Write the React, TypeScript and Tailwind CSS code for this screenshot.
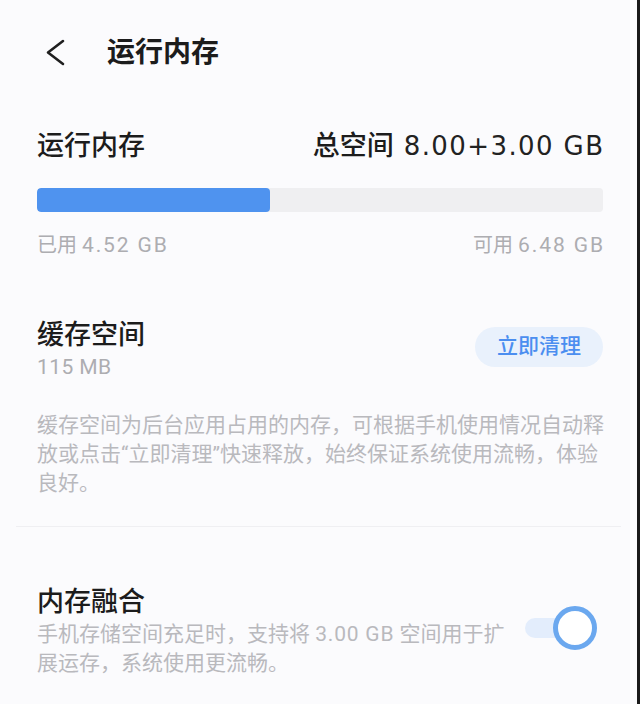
import React from "react";

const FONT = { fontFamily: 'Roboto, "Noto Sans CJK SC", sans-serif' };
const WIDE = { fontFamily: '"DejaVu Sans", "Noto Sans CJK SC", sans-serif' };

function Chevron() {
  return (
    <svg width="20" height="28" viewBox="0 0 20 28" fill="none">
      <polyline
        points="17,2 2,13.5 17,25"
        stroke="#1f1f1f"
        strokeWidth="2.6"
        strokeLinecap="round"
        strokeLinejoin="round"
      />
    </svg>
  );
}

function Toggle() {
  return (
    <div className="relative w-[72px] h-[44px] shrink-0">
      <div className="absolute left-0 top-[12px] h-[20px] w-[52px] rounded-full bg-[#e3edfc]" />
      <div className="absolute right-0 top-0 h-[44px] w-[44px] rounded-full border-[5px] border-[#6ba8ef] bg-white" />
    </div>
  );
}

export default function App() {
  const used = 4.52;
  const total = 11;
  const pct = (used / total) * 100;
  return (
    <div
      className="w-[640px] h-[704px] overflow-hidden bg-[#fbfbfd] border-r-[3px] border-[#1a1a1a] text-[#1c1c1c]"
      style={FONT}
    >
      <div className="h-[106px] flex items-center pl-[46px]">
        <Chevron />
        <div className="ml-[41px] text-[28px] leading-[36px] font-bold">运行内存</div>
      </div>

      <div className="pl-[37px] pr-[34px]">
        <div className="mt-[22px] flex items-center justify-between whitespace-nowrap">
          <div className="text-[27px] leading-[36px] font-medium shrink-0">运行内存</div>
          <div className="text-[27px] leading-[36px] font-medium shrink-0 whitespace-nowrap flex items-center">
            <span>总空间</span>
            <span className="ml-[10px] font-normal text-[26px] tracking-[1.4px] mr-[-1.4px] text-[#222222]" style={WIDE}>
              8.00+3.00 GB
            </span>
          </div>
        </div>

        <div className="mt-[24px] h-[24px] w-full rounded-[4px] bg-[#efeff1] overflow-hidden flex">
          <div className="h-full bg-[#4f93ef] rounded-[4px]" style={{ width: `${pct}%` }} />
        </div>

        <div className="mt-[19px] flex items-center justify-between text-[20px] leading-[28px] text-[#adadb1] whitespace-nowrap">
          <div className="shrink-0">
            已用 <span className="text-[21px] tracking-[1.9px]">4.52 GB</span>
          </div>
          <div className="shrink-0">
            可用 <span className="text-[21px] tracking-[1.9px] mr-[-1.9px]">6.48 GB</span>
          </div>
        </div>

        <div className="mt-[58px] flex items-start justify-between">
          <div className="flex flex-col">
            <div className="text-[27px] leading-[36px] font-medium">缓存空间</div>
            <div className="text-[21px] leading-[28px] text-[#adadb1] tracking-[0.4px]">115 MB</div>
          </div>
          <button className="mt-[10px] h-[40px] w-[128px] rounded-full bg-[#e9f1fc] text-[21px] text-[#4b8ef0] font-medium flex items-center justify-center">
            立即清理
          </button>
        </div>

        <div className="mt-[30px] text-[21px] leading-[29px] text-[#b9b9bd] whitespace-nowrap">
          缓存空间为后台应用占用的内存，可根据手机使用情况自动释
          <br />
          放或点击“立即清理”快速释放，始终保证系统使用流畅，体验
          <br />
          良好。
        </div>
      </div>

      <div className="mt-[28px] mx-[16px] h-px bg-[#efeff2]" />

      <div className="pl-[37px] pr-[34px] mt-[57px] flex items-center justify-between">
        <div className="flex flex-col shrink-0">
          <div className="text-[27px] leading-[36px] font-medium">内存融合</div>
          <div className="text-[21px] leading-[29px] text-[#b9b9bd] whitespace-nowrap">
            手机存储空间充足时，支持将 <span className="tracking-[0.8px]">3.00 GB</span> 空间用于扩
            <br />
            展运存，系统使用更流畅。
          </div>
        </div>
        <div className="mr-[6px] mb-[6px]">
          <Toggle />
        </div>
      </div>
    </div>
  );
}
